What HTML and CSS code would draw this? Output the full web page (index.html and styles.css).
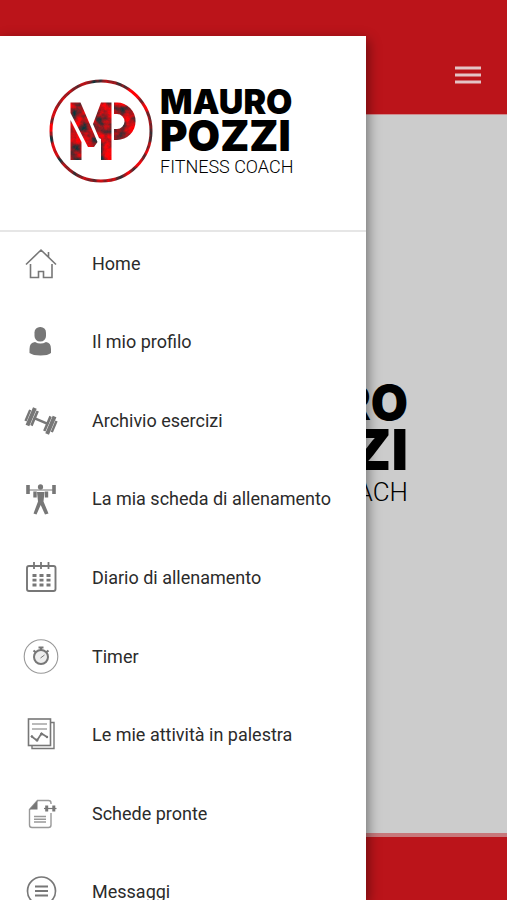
FILE: index.html
```html
<!DOCTYPE html>
<html lang="it">
<head>
<meta charset="utf-8">
<meta name="viewport" content="width=device-width, initial-scale=1">
<title>Mauro Pozzi Fitness Coach</title>
<link rel="stylesheet" href="styles.css">
</head>
<body>
<div class="app">
  <header class="topbar">
    <button class="menu-button" type="button" aria-label="Menu">
      <svg viewBox="0 0 26 18" width="26" height="18"><path d="M0 2h26M0 9h26M0 16h26" stroke="#e4c4c6" stroke-width="3"/></svg>
    </button>
  </header>
  <main class="content">
    <div class="wordmark wordmark-large">
      <span class="word-first">MAURO</span>
      <span class="word-last">POZZI</span>
      <span class="word-role">FITNESS COACH</span>
    </div>
  </main>
  <footer class="bottombar"></footer>

  <aside class="drawer">
    <div class="brand">
      <svg class="emblem" viewBox="0 0 104 104" aria-hidden="true">
        <defs>
          <filter id="grunge" filterUnits="userSpaceOnUse" x="0" y="0" width="104" height="104" color-interpolation-filters="sRGB">
            <feTurbulence type="fractalNoise" baseFrequency="0.09" numOctaves="4" seed="8" result="noise"/>
            <feColorMatrix in="noise" type="matrix" values="2 0 0 0 -0.35  -0.4 0 0 0 0.29  -0.4 0 0 0 0.31  0 0 0 0 1" result="tint"/>
            <feComposite in="tint" in2="SourceGraphic" operator="in"/>
          </filter>
        </defs>
        <g filter="url(#grunge)">
          <circle cx="52" cy="52" r="50" fill="none" stroke="#a01820" stroke-width="3"/>
          <path fill="#a01820" d="M21.500 23.500H31.500L48.500 63L45 68H39L21.500 34ZM21.500 41L32.500 63V81H21.500ZM52 23.500H62.500V81H52V60L50 59L44 45ZM65 23.500H68A18.500 18.700 0 0 1 68 61H65V50H68A7.500 7.500 0 0 0 68 35H65Z"/>
        </g>
      </svg>
      <div class="wordmark">
        <span class="word-first">MAURO</span>
        <span class="word-last">POZZI</span>
        <span class="word-role">FITNESS COACH</span>
      </div>
    </div>
    <nav class="menu">
      <a class="item" href="#home">
        <svg class="icon" viewBox="0 0 36 36"><path d="M3 18.500L18 4L33 18.500M7.500 18V31.500H15.500V25.500H20.500V31.500H29V18M25.500 11V6" stroke-width="1.600"/></svg>
        <span>Home</span></a>
      <a class="item" href="#profilo">
        <svg class="icon solid" viewBox="0 0 36 36"><rect x="11.500" y="3" width="11.500" height="14.500" rx="5.500"/><path d="M6.500 29V25Q6.500 18.500 12 18Q17.500 21 23 18Q28 18.500 28 25V29Q25 31.500 17.500 31.500Q10 31.500 6.500 29Z"/></svg>
        <span>Il mio profilo</span></a>
      <a class="item" href="#esercizi">
        <svg class="icon" viewBox="0 0 36 36"><g transform="rotate(23 18 18)"><path d="M10 18H26" stroke-width="2.600"/><path d="M3.700 12V24M32.300 12V24" stroke-width="2.400"/><path d="M7.300 8.500V27.500M28.700 8.500V27.500" stroke-width="4"/><path d="M11 10V26M25 10V26" stroke-width="2.600"/></g></svg>
        <span>Archivio esercizi</span></a>
      <a class="item" href="#scheda">
        <svg class="icon" viewBox="0 0 36 36"><path d="M5 9H31" stroke-width="1"/><path d="M5 4V13M31 4V13" stroke-width="3.600"/><g fill="#777" stroke="none"><ellipse cx="17.500" cy="6" rx="2.600" ry="2.800"/><path d="M14 11H21.500L20.500 20.500L25.500 32.500L22 33.500L17.700 24L13.500 33.500L10.500 32.500L15 20.500Z"/></g><path d="M12 10.500V16.500M23.500 10.500V16.500" stroke-width="3.400"/></svg>
        <span>La mia scheda di allenamento</span></a>
      <a class="item" href="#diario">
        <svg class="icon" viewBox="0 0 36 36"><rect x="4" y="6" width="28.500" height="25" rx="2" stroke-width="1.900"/><path d="M11 2V9M18 2V9M25.500 2V9" stroke-width="1.800"/><path d="M9.500 15.500H27.500M9.500 20.200H27.500M9.500 25H27.500" stroke-width="2.800" stroke-dasharray="4 3"/></svg>
        <span>Diario di allenamento</span></a>
      <a class="item" href="#timer">
        <svg class="icon" viewBox="0 0 36 36"><circle cx="18" cy="17.500" r="16.800" stroke="#999" stroke-width="1.100"/><circle cx="18" cy="18" r="7" fill="#eee" stroke-width="2"/><path d="M18 11.500V8.500M15.500 8.500H20.500M10.500 11.500L13 13.500M25.500 11.500L23 13.500" stroke-width="2.200"/><path d="M17.500 19L21.500 16" stroke-width="1"/></svg>
        <span>Timer</span></a>
      <a class="item" href="#attivita">
        <svg class="icon" viewBox="0 0 36 36"><path d="M27.500 5.500H31V31.500H9V28.500" stroke-width="1.400"/><rect x="5.500" y="2" width="22" height="26.500" stroke-width="1.600"/><path d="M9 7H24M9 12H24" stroke-width="1.200"/><path d="M8 19L14 23.500L18.500 16.500L24 20" stroke-width="1.700"/><g fill="#777" stroke="none"><circle cx="9" cy="19.500" r="1.200"/><circle cx="14" cy="23" r="1.500"/><circle cx="18.500" cy="17" r="1.500"/><circle cx="24" cy="20" r="1.200"/></g></svg>
        <span>Le mie attività in palestra</span></a>
      <a class="item" href="#schede">
        <svg class="icon" viewBox="0 0 36 36"><path d="M28 8V7Q28 4.500 25.500 4.500H14.500L6.500 13.500V29Q6.500 31.500 9 31.500H25.500Q28 31.500 28 29V17" stroke="#999" stroke-width="1.400"/><path d="M6.500 13.500L14.500 4.500V13.500Z" fill="#777" stroke="none"/><path d="M11 20.500H23M11 23.200H23M11 26H23" stroke="#999" stroke-width="1.500"/><path d="M21 12.500H33.500" stroke-width="1.200"/><path d="M23.700 9.500V15.500M30.800 9.500V15.500" stroke-width="3"/></svg>
        <span>Schede pronte</span></a>
      <a class="item" href="#messaggi">
        <svg class="icon" viewBox="0 0 36 36"><circle cx="18.500" cy="17" r="14" stroke-width="1.700"/><path d="M12 12.500H25M12 17H25M12 21.500H25" stroke-width="1.800"/></svg>
        <span>Messaggi</span></a>
    </nav>
  </aside>
</div>
</body>
</html>
```

FILE: styles.css
```css
* { box-sizing: border-box; }

body {
  margin: 0;
  font-family: Roboto, "Liberation Sans", sans-serif;
}

.app {
  position: relative;
  display: flex;
  flex-direction: column;
  height: 100vh;
  overflow: hidden;
  background: #cccccc;
}

.topbar {
  display: flex;
  justify-content: flex-end;
  align-items: flex-end;
  height: 115px;
  padding: 0 26px 30px;
  background: #bb141a;
  border-bottom: 1px solid #d08b8e;
}

.menu-button {
  display: flex;
  padding: 0;
  border: 0;
  background: none;
}

.content {
  flex: 1;
  display: flex;
  align-items: center;
  justify-content: flex-end;
  padding: 0 99px 58px 0;
}

.bottombar {
  height: 67px;
  background: #bb141a;
  border-top: 4px solid #c7787b;
}

.drawer {
  position: absolute;
  top: 36px;
  bottom: 0;
  left: 0;
  width: calc(100% - 141px);
  overflow: hidden;
  background: #ffffff;
  box-shadow: 2px 4px 12px rgba(0, 0, 0, 0.45);
}

.brand {
  display: flex;
  align-items: center;
  gap: 7px;
  height: 196px;
  padding: 0 0 4px 49px;
  border-bottom: 2px solid #e6e6e6;
}

.emblem {
  flex: none;
  width: 104px;
  height: 104px;
}

.wordmark {
  display: flex;
  flex-direction: column;
  padding-top: 4px;
  color: #000000;
  font-family: Inter, sans-serif;
  font-weight: 900;
  white-space: nowrap;
}

.word-first {
  font-size: 34px;
  line-height: 32px;
}

.word-last {
  font-size: 42px;
  line-height: 36px;
}

.word-role {
  font-family: Roboto, sans-serif;
  font-size: 18px;
  font-weight: 300;
  line-height: 26px;
}

.wordmark-large {
  align-items: flex-end;
  padding-top: 0;
}

.wordmark-large .word-first {
  font-size: 48px;
  line-height: 46px;
}

.wordmark-large .word-last {
  font-size: 57px;
  line-height: 48px;
}

.wordmark-large .word-role {
  font-size: 26px;
  line-height: 36px;
}

.menu {
  display: grid;
  grid-template-rows: repeat(9, 1fr);
  row-gap: 17px;
  height: 691px;
  padding-top: 1px;
}

.item {
  display: flex;
  align-items: center;
  gap: 33px;
  padding-left: 23px;
  color: #2b2b2b;
  font-size: 18px;
  line-height: 24px;
  text-decoration: none;
  white-space: nowrap;
}

.icon {
  flex: none;
  width: 36px;
  height: 36px;
  fill: none;
  stroke: #777777;
}

.icon.solid {
  fill: #777777;
  stroke: none;
}
```
